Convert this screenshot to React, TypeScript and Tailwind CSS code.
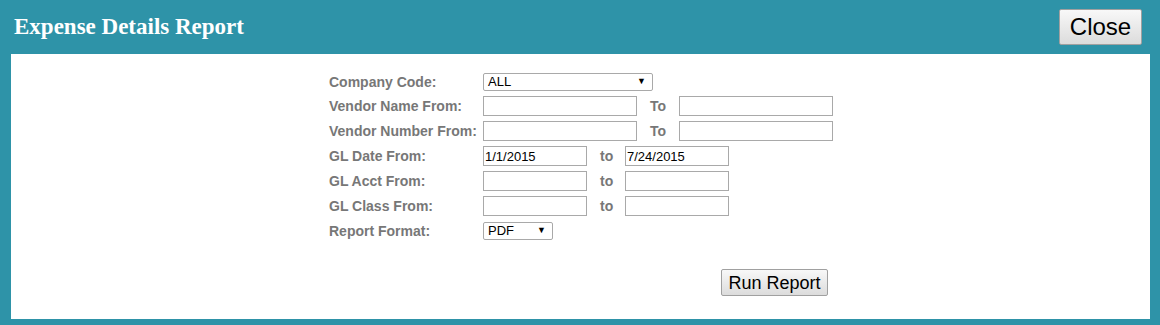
import React from "react";

const labelCls = "text-[14px] font-bold text-[#777777] leading-none";
const inputCls =
  "h-[20px] border border-[#a9a9a9] bg-white px-[1px] text-[13px] leading-[18px] text-black outline-none";

function FakeSelect({ value, width }: { value: string; width: string }) {
  return (
    <div
      className={`flex h-[18px] items-center justify-between rounded-[2px] border border-[#a9a9a9] bg-white pl-[4px] pr-[6px] text-[13px] text-black ${width}`}
    >
      <span>{value}</span>
      <span className="text-[9px]">▼</span>
    </div>
  );
}

type RangeRow = {
  label: string;
  sep: string;
  wide: boolean;
  from?: string;
  to?: string;
};

const ROWS: RangeRow[] = [
  { label: "Vendor Name From:", sep: "To", wide: true },
  { label: "Vendor Number From:", sep: "To", wide: true },
  { label: "GL Date From:", sep: "to", wide: false, from: "1/1/2015", to: "7/24/2015" },
  { label: "GL Acct From:", sep: "to", wide: false },
  { label: "GL Class From:", sep: "to", wide: false },
];

export default function App() {
  return (
    <div
      className="flex h-[325px] w-[1160px] flex-col bg-[#2e93a8]"
      style={{ fontFamily: '"Liberation Sans", Arial, sans-serif' }}
    >
      <div className="flex h-[54px] items-start justify-between pl-[14px] pr-[18px]">
        <h1
          className="mt-[15px] text-[23px] font-bold leading-none text-white"
          style={{ fontFamily: '"Liberation Serif", "Times New Roman", serif' }}
        >
          Expense Details Report
        </h1>
        <button className="mt-[9px] h-[36px] w-[83px] rounded-[2px] border border-[#a0a0a0] bg-gradient-to-b from-[#f8f8f8] to-[#dcdcdc] text-[24px] leading-none text-black">
          Close
        </button>
      </div>

      <div className="ml-[11px] mr-[10px] flex-1 bg-white">
        <div className="ml-[318px] mt-[18px] flex flex-col">
          <div className="flex h-[19px] items-center">
            <span className={`${labelCls} w-[154px]`}>Company Code:</span>
            <FakeSelect value="ALL" width="w-[170px]" />
          </div>
          {ROWS.map((row) => (
            <div key={row.label} className="mt-[5px] flex h-[20px] items-center">
              <span className={`${labelCls} w-[154px]`}>{row.label}</span>
              <input
                readOnly
                value={row.from ?? ""}
                className={`${inputCls} ${row.wide ? "w-[154px]" : "w-[104px]"}`}
              />
              <span className={`${labelCls} pl-[13px] ${row.wide ? "w-[42px]" : "w-[38px]"}`}>{row.sep}</span>
              <input
                readOnly
                value={row.to ?? ""}
                className={`${inputCls} ${row.wide ? "w-[154px]" : "w-[104px]"}`}
              />
            </div>
          ))}
          <div className="mt-[5px] flex h-[19px] items-center">
            <span className={`${labelCls} w-[154px]`}>Report Format:</span>
            <FakeSelect value="PDF" width="w-[70px]" />
          </div>
          <div className="mt-[29px] flex">
            <button className="ml-[392px] h-[27px] w-[107px] rounded-[2px] border border-[#a0a0a0] bg-gradient-to-b from-[#f8f8f8] to-[#dcdcdc] text-[18px] leading-none text-black">
              Run Report
            </button>
          </div>
        </div>
      </div>
      <div className="h-[6px]" />
    </div>
  );
}
